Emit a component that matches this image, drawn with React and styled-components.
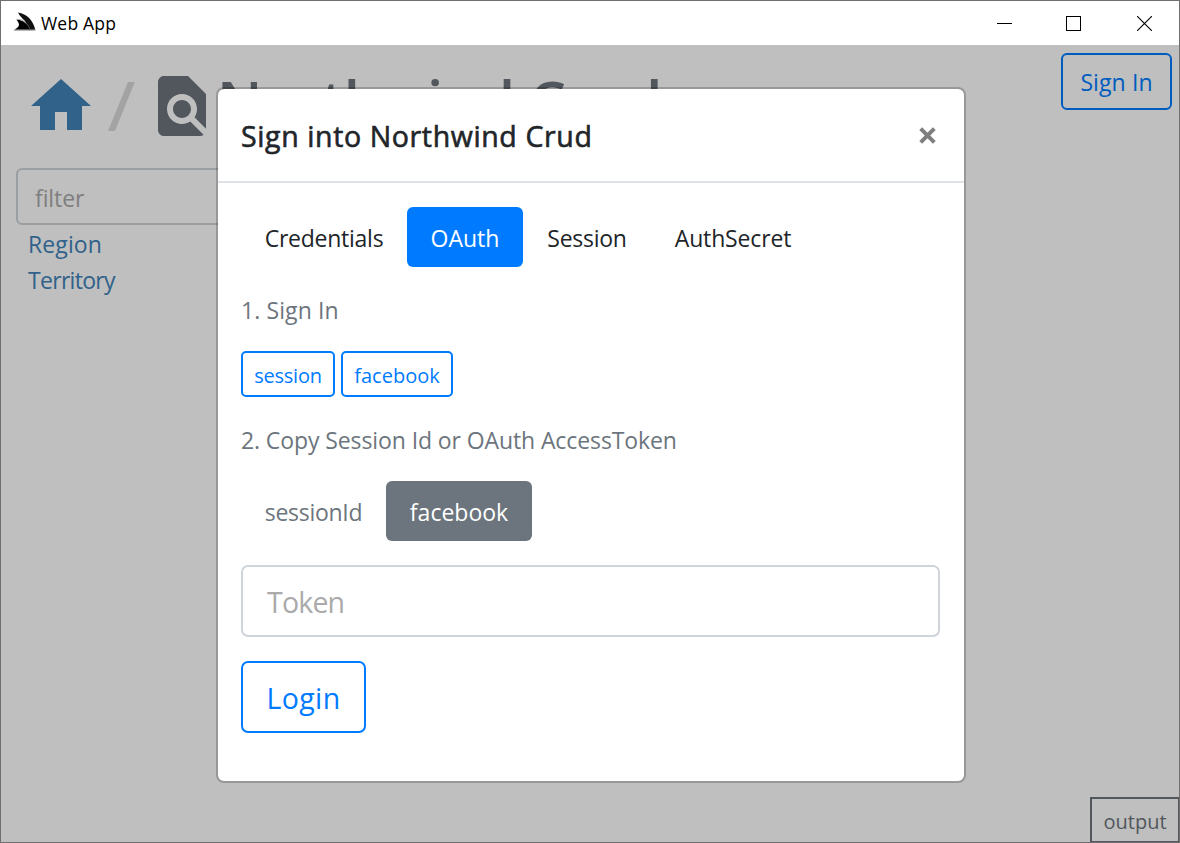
import React from "react";
import styled, { createGlobalStyle } from "styled-components";

const GlobalStyle = createGlobalStyle`
  *, *::before, *::after { box-sizing: border-box; }
  html, body { margin: 0; padding: 0; overflow: hidden; }
  body {
    font-family: "Open Sans", "Noto Sans", sans-serif;
    font-size: 23px;
    line-height: 36px;
    color: #212529;
  }
  button, input { font-family: inherit; margin: 0; }
`;

const Window = styled.div`
  width: 1180px;
  height: 843px;
  border: 1px solid #6f6f6f;
  display: flex;
  flex-direction: column;
  overflow: hidden;
  background: #fff;
`;

const TitleBar = styled.header`
  height: 44px;
  flex: none;
  display: flex;
  align-items: center;
  padding-left: 12px;
  color: #000;
`;

const AppIcon = styled.svg`
  width: 24px;
  height: 24px;
  flex: none;
`;

const AppName = styled.span`
  flex: 1;
  margin-left: 4px;
  font-size: 17.5px;
  letter-spacing: 0.2px;
`;

const WindowButton = styled.button`
  width: ${(p) => p.$w || 70}px;
  height: 44px;
  padding: 0;
  border: 0;
  background: none;
  display: flex;
  align-items: center;
  justify-content: center;
`;

const Content = styled.div`
  position: relative;
  flex: 1;
  display: flex;
  flex-direction: column;
`;

const PageHeader = styled.div`
  height: 123px;
  flex: none;
  display: flex;
  align-items: flex-start;
  padding: 25px 7px 0 24px;
`;

const PageIcon = styled.svg`
  width: 72px;
  height: 72px;
  flex: none;
  fill: ${(p) => p.$color};
`;

const Slash = styled.svg`
  width: 49px;
  height: 72px;
  flex: none;
`;

const PageTitle = styled.h1`
  margin: -5px 0 0 -1px;
  flex: 1;
  font-size: 58px;
  line-height: 72px;
  font-weight: 600;
  letter-spacing: -0.5px;
  white-space: nowrap;
  color: #6c757d;
`;

const OutlineButton = styled.button`
  width: ${(p) => p.$w}px;
  height: ${(p) => p.$h}px;
  flex: none;
  padding: ${(p) => p.$top || 0}px 0 0;
  border: 2px solid #007bff;
  border-radius: ${(p) => p.$radius || 6}px;
  background: transparent;
  color: #007bff;
  font-size: ${(p) => p.$size}px;
  line-height: 1;
  letter-spacing: ${(p) => p.$track || 0}px;
  white-space: nowrap;
`;

const SignIn = styled(OutlineButton)`
  margin-top: -17px;
`;

const Sidebar = styled.nav`
  width: 300px;
  padding-left: 15px;
  display: flex;
  flex-direction: column;
`;

const Field = styled.input`
  display: block;
  width: 100%;
  height: ${(p) => p.$h}px;
  padding: ${(p) => p.$pad};
  border: 2px solid #ced4da;
  border-radius: ${(p) => p.$radius}px;
  background: transparent;
  font-size: ${(p) => p.$size}px;
  letter-spacing: ${(p) => p.$track || 0}px;
  outline: 0;
  &::placeholder { color: #aaa; opacity: 1; }
`;

const Links = styled.div`
  display: flex;
  flex-direction: column;
  padding: 1px 0 0 12px;
`;

const SideLink = styled.a`
  color: #4183b9;
  letter-spacing: ${(p) => p.$track}px;
`;

const Output = styled.button`
  width: 90px;
  height: 46px;
  margin: auto -1px -1px auto;
  padding: 4px 0 0;
  border: 2px solid #6c757d;
  background: transparent;
  color: #6c757d;
  font-size: 20px;
  line-height: 1;
`;

const Backdrop = styled.div`
  position: absolute;
  inset: 0;
  display: flex;
  align-items: flex-start;
  padding: 42px 0 0 215px;
  background: rgba(0, 0, 0, 0.25);
`;

const Dialog = styled.section`
  width: 750px;
  height: 696px;
  border: 2px solid rgba(0, 0, 0, 0.2);
  border-radius: 8px;
  background: #fff;
  background-clip: padding-box;
`;

const DialogHeader = styled.div`
  height: 94px;
  display: flex;
  align-items: center;
  justify-content: space-between;
  padding: 0 28px 0 23px;
  border-bottom: 2px solid #dee2e6;
`;

const DialogTitle = styled.h5`
  margin: 2px 0 0;
  font-size: 28.5px;
  font-weight: 400;
  -webkit-text-stroke: 0.6px #212529;
  line-height: 45px;
  letter-spacing: 0.62px;
  color: #212529;
`;

const CloseButton = styled.button`
  display: flex;
  padding: 0;
  border: 0;
  background: none;
`;

const DialogBody = styled.div`
  display: flex;
  flex-direction: column;
  padding: 24px 24px 0 23px;
`;

const Tabs = styled.div`
  display: flex;
`;

const Tab = styled.button`
  width: ${(p) => p.$w}px;
  height: 60px;
  padding: 3px 0 0;
  border: 0;
  border-radius: 6px;
  background: ${(p) => p.$fill || "transparent"};
  color: ${(p) => (p.$fill ? "#fff" : p.$color)};
  font-size: 23px;
  line-height: 1;
  letter-spacing: ${(p) => p.$track || 0}px;
  white-space: nowrap;
`;

const Step = styled.p`
  margin: 25px 0 23px;
  height: 36px;
  color: #6c757d;
  letter-spacing: ${(p) => p.$track || 0}px;
  white-space: nowrap;
`;

const ButtonRow = styled.div`
  display: flex;
  gap: 6px;
`;

const FormRow = styled.div`
  margin-top: 24px;
`;

export default function App() {
  return (
    <>
      <GlobalStyle />
      <Window>
        <TitleBar>
          <AppIcon viewBox="0 0 24 24">
            <path d="M5 1.500C14 3 20 9 22.300 18.700H16L12 10C9.500 7.500 7 5.500 5 1.500Z" fill="#111" />
            <path d="M3.300 8.500C10 9 14.800 12.500 16.800 18.700H1.500C4 17.200 5.700 15.800 6 14C6 12 4.800 10.300 3.300 8.500Z" fill="#000" />
            <path d="M6 8.300C11.500 9.500 15.200 13 16.800 18" fill="none" stroke="#777" strokeWidth=".6" />
            <path d="M.8 19.200H22.500" stroke="#999" strokeWidth="1" />
          </AppIcon>
          <AppName>Web App</AppName>
          <WindowButton $w={65} aria-label="Minimize">
            <svg width="15" height="15" shapeRendering="crispEdges"><path d="M0 7.500H15" stroke="#000" /></svg>
          </WindowButton>
          <WindowButton $w={73} aria-label="Maximize">
            <svg width="15" height="15" shapeRendering="crispEdges"><path d="M.5 .5H14.500V14.500H.5Z" fill="none" stroke="#000" /></svg>
          </WindowButton>
          <WindowButton $w={69} aria-label="Close window">
            <svg width="15" height="15"><path d="M0 0L15 15M15 0L0 15" stroke="#000" strokeWidth="1.100" /></svg>
          </WindowButton>
        </TitleBar>
        <Content>
          <PageHeader>
            <PageIcon $color="#4183b9" viewBox="0 0 24 24">
              <path d="M10 20v-6h4v6h5v-8h3L12 3 2 12h3v8z" />
            </PageIcon>
            <Slash viewBox="0 0 49 72">
              <path d="M31 12H37.800L18 61H11Z" fill="#dadada" />
            </Slash>
            <PageIcon $color="#6c757d" viewBox="0 0 24 24">
              <path d="M20 19.590V8l-6-6H6c-1.100 0-1.990.9-1.990 2L4 20c0 1.100.89 2 1.990 2H18c.45 0 .85-.15 1.190-.4l-4.430-4.430c-.8.52-1.740.83-2.760.83-2.760 0-5-2.240-5-5s2.240-5 5-5 5 2.240 5 5c0 1.020-.31 1.960-.83 2.750L20 19.590zM9 13c0 1.660 1.340 3 3 3s3-1.340 3-3-1.340-3-3-3-3 1.340-3 3z" />
            </PageIcon>
            <PageTitle>Northwind Crud</PageTitle>
            <SignIn $w={111} $h={57} $size={23} $top={2} $track={0.1}>Sign In</SignIn>
          </PageHeader>
          <Sidebar>
            <Field $h={57} $pad="2px 17px 0" $radius={6} $size={23} $track={-0.1} placeholder="filter" />
            <Links>
              <SideLink $track={0.1}>Region</SideLink>
              <SideLink $track={-0.7}>Territory</SideLink>
            </Links>
          </Sidebar>
          <Output>output</Output>
          <Backdrop>
            <Dialog role="dialog">
              <DialogHeader>
                <DialogTitle>Sign into Northwind Crud</DialogTitle>
                <CloseButton aria-label="Close">
                  <svg width="17" height="17"><path d="M1.700 1.700L15.300 15.300M15.300 1.700L1.700 15.300" stroke="#7f7f7f" strokeWidth="4" /></svg>
                </CloseButton>
              </DialogHeader>
              <DialogBody>
                <Tabs>
                  <Tab $w={166} $color="#212529" $track={-0.25}>Credentials</Tab>
                  <Tab $w={116} $fill="#007bff">OAuth</Tab>
                  <Tab $w={128} $color="#212529" $track={-0.25}>Session</Tab>
                  <Tab $w={164} $color="#212529" $track={-0.15}>AuthSecret</Tab>
                </Tabs>
                <Step $track={0.1}>1. Sign In</Step>
                <ButtonRow>
                  <OutlineButton $w={94} $h={46} $size={20} $radius={5} $top={4} $track={-0.25}>session</OutlineButton>
                  <OutlineButton $w={112} $h={46} $size={20} $radius={5} $top={4}>facebook</OutlineButton>
                </ButtonRow>
                <Step $track={-0.1}>2. Copy Session Id or OAuth AccessToken</Step>
                <Tabs>
                  <Tab $w={145} $color="#6c757d" $track={-0.3}>sessionId</Tab>
                  <Tab $w={146} $fill="#6c757d">facebook</Tab>
                </Tabs>
                <FormRow>
                  <Field $h={72} $pad="2px 24px 0" $radius={7} $size={28.500} $track={-0.8} placeholder="Token" />
                </FormRow>
                <FormRow>
                  <OutlineButton $w={125} $h={72} $size={28.500} $radius={7} $top={3} $track={0.4}>Login</OutlineButton>
                </FormRow>
              </DialogBody>
            </Dialog>
          </Backdrop>
        </Content>
      </Window>
    </>
  );
}
